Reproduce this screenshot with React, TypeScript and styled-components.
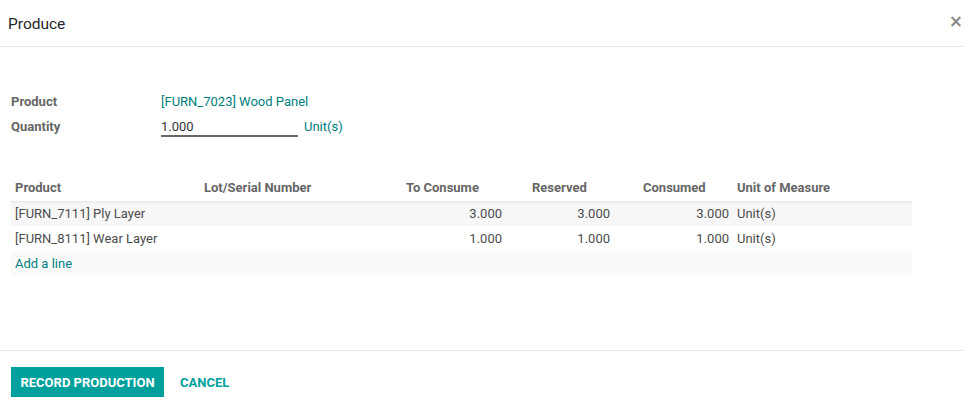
import React from 'react'
import styled, { createGlobalStyle } from 'styled-components'

const teal = '#00a09d'
const link = '#00807e'
const text = '#4c4c4c'

type Line = {
	product: string
	toConsume: string
	reserved: string
	consumed: string
	uom: string
}

const lines: Line[] = [
	{ product: '[FURN_7111] Ply Layer', toConsume: '3.000', reserved: '3.000', consumed: '3.000', uom: 'Unit(s)' },
	{ product: '[FURN_8111] Wear Layer', toConsume: '1.000', reserved: '1.000', consumed: '1.000', uom: 'Unit(s)' },
]

const GlobalStyle = createGlobalStyle`
	body {
		margin: 0;
		background: #fff;
		font-family: Roboto, "Noto Sans", sans-serif;
		font-size: 13px;
		color: ${text};
	}
`

export default function App() {
	return (
		<>
			<GlobalStyle />
			<Dialog>
				<Header>
					<Title>Produce</Title>
					<Close aria-label="close">×</Close>
				</Header>
				<Body>
					<Fields>
						<Label>Product</Label>
						<LinkValue>[FURN_7023] Wood Panel</LinkValue>
						<Label>Quantity</Label>
						<QtyRow>
							<QtyInput>1.000</QtyInput>
							<LinkValue>Unit(s)</LinkValue>
						</QtyRow>
					</Fields>
					<Table>
						<colgroup>
							<col style={{ width: 189 }} />
							<col style={{ width: 202 }} />
							<col style={{ width: 126 }} />
							<col style={{ width: 111 }} />
							<col style={{ width: 94 }} />
							<col />
						</colgroup>
						<thead>
							<tr>
								<Th>Product</Th>
								<Th>Lot/Serial Number</Th>
								<Th>To Consume</Th>
								<Th>Reserved</Th>
								<Th>Consumed</Th>
								<Th>Unit of Measure</Th>
							</tr>
						</thead>
						<tbody>
							{lines.map((l, i) => (
								<Row key={l.product} shaded={i === 0}>
									<Td>{l.product}</Td>
									<Td></Td>
									<Td num pad={26}>{l.toConsume}</Td>
									<Td num pad={29}>{l.reserved}</Td>
									<Td num pad={4}>{l.consumed}</Td>
									<Td>{l.uom}</Td>
								</Row>
							))}
							<AddRow>
								<Td colSpan={6}><AddLink>Add a line</AddLink></Td>
							</AddRow>
						</tbody>
					</Table>
				</Body>
				<Footer>
					<PrimaryButton>Record Production</PrimaryButton>
					<LinkButton>Cancel</LinkButton>
				</Footer>
			</Dialog>
		</>
	)
}

const Dialog = styled.div`
	width: 964px;
	height: 416px;
	display: flex;
	flex-direction: column;
`

const Header = styled.div`
	height: 47px;
	border-bottom: 1px solid #e5e5e5;
	display: flex;
	align-items: center;
	justify-content: space-between;
	padding: 0 1px 0 8px;
	box-sizing: border-box;
`

const Title = styled.h4`
	margin: 0;
	font-size: 15.5px;
	font-weight: 400;
	color: #262626;
	padding-top: 1px;
`

const Close = styled.span`
	font-family: "DejaVu Sans", sans-serif;
	font-size: 17px;
	font-weight: bold;
	color: #8a8a8a;
	line-height: 1;
	margin-top: -4px;
`

const Body = styled.div`
	flex: 1;
	padding: 42px 52px 0 11px;
`

const Fields = styled.div`
	display: grid;
	grid-template-columns: 150px auto;
	grid-auto-rows: 25px;
	align-items: center;
	margin-bottom: 36px;
`

const Label = styled.div`
	font-weight: bold;
	color: #666;
`

const LinkValue = styled.span`
	color: ${link};
`

const QtyRow = styled.div`
	display: flex;
	align-items: center;
	gap: 6px;
`

const QtyInput = styled.div`
	width: 137px;
	border-bottom: 2px solid #666;
	padding: 2px 0 1px;
	color: #333;
	margin-top: 1px;
`

const Table = styled.table`
	width: 901px;
	border-collapse: collapse;
	table-layout: fixed;
`

const Th = styled.th`
	text-align: left;
	font-weight: bold;
	color: #666;
	height: 24px;
	padding: 0 4px 2px;
	vertical-align: middle;
`

const Row = styled.tr<{ shaded: boolean }>`
	background: ${p => p.shaded ? '#f7f7f7' : '#fff'};
	box-shadow: ${p => p.shaded ? 'inset 0 3px 3px -2px rgba(0,0,0,0.08)' : 'none'};
`

const Td = styled.td<{ num?: boolean, pad?: number }>`
	height: 25px;
	padding: 0 ${p => p.pad ?? 4}px 0 4px;
	text-align: ${p => p.num ? 'right' : 'left'};
	vertical-align: middle;
	color: ${text};
	white-space: nowrap;
`

const AddRow = styled.tr`
	background: #fafafa;
`

const AddLink = styled.a`
	color: ${link};
	cursor: pointer;
`

const Footer = styled.div`
	height: 66px;
	border-top: 1px solid #e5e5e5;
	display: flex;
	align-items: center;
	gap: 4px;
	padding: 0 11px 3px;
	box-sizing: border-box;
`

const PrimaryButton = styled.button`
	height: 30px;
	padding: 0 9px;
	background: ${teal};
	border: none;
	color: #fff;
	font-family: Roboto, sans-serif;
	font-size: 13px;
	font-weight: bold;
	text-transform: uppercase;
	width: 153px;
	white-space: nowrap;
`

const LinkButton = styled.button`
	height: 30px;
	padding: 0 12px;
	background: none;
	border: none;
	color: ${teal};
	font-family: Roboto, sans-serif;
	font-size: 13px;
	font-weight: bold;
	text-transform: uppercase;
`
